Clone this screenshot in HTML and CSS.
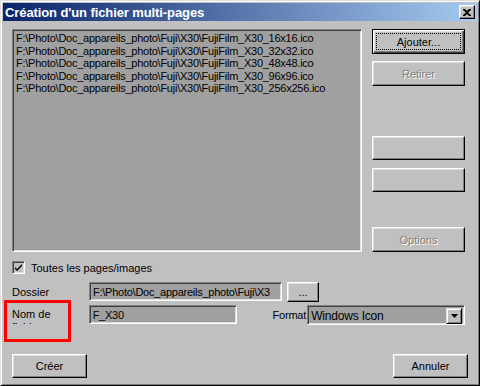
FILE: index.html
```html
<!DOCTYPE html>
<html lang="fr">
<head>
<meta charset="utf-8">
<title>Création d'un fichier multi-pages</title>
<link rel="stylesheet" href="styles.css">
</head>
<body>
<div class="window">
  <div class="titlebar">
    <span class="title">Création d'un fichier multi-pages</span>
    <span class="close"><svg width="8" height="7" viewBox="0 0 8 7"><path d="M0 0h2l2 2 2-2h2v1L5 3.5 8 6v1H6L4 5 2 7H0V6l3-2.5L0 1z" fill="#000"/></svg></span>
  </div>
  <div class="body">
    <div class="top">
      <div class="list">
        <div>F:\Photo\Doc_appareils_photo\Fuji\X30\FujiFilm_X30_16x16.ico</div>
        <div>F:\Photo\Doc_appareils_photo\Fuji\X30\FujiFilm_X30_32x32.ico</div>
        <div>F:\Photo\Doc_appareils_photo\Fuji\X30\FujiFilm_X30_48x48.ico</div>
        <div>F:\Photo\Doc_appareils_photo\Fuji\X30\FujiFilm_X30_96x96.ico</div>
        <div>F:\Photo\Doc_appareils_photo\Fuji\X30\FujiFilm_X30_256x256.ico</div>
      </div>
      <div class="side">
        <button class="btn default"><span class="focus">Ajouter...</span></button>
        <button class="btn disabled retirer">Retirer</button>
        <button class="btn blank1"></button>
        <button class="btn blank2"></button>
        <button class="btn disabled options">Options</button>
      </div>
    </div>
    <div class="check-row">
      <span class="checkbox"><svg width="9" height="9" viewBox="0 0 9 9"><path d="M1 4l2 2 5-5v2L3 8 1 6z" fill="#000"/></svg></span>
      <span>Toutes les pages/images</span>
    </div>
    <div class="row dossier">
      <span class="label">Dossier</span>
      <span class="field field-dossier">F:\Photo\Doc_appareils_photo\Fuji\X3</span>
      <button class="btn small">...</button>
    </div>
    <div class="row nom">
      <span class="label label-nom">Nom de fichier</span>
      <span class="field field-nom">F_X30</span>
      <span class="format-label">Format</span>
      <span class="select">
        <span class="select-text">Windows Icon</span>
        <span class="drop"><svg width="7" height="4" viewBox="0 0 7 4"><path d="M0 0h7L3.5 4z" fill="#000"/></svg></span>
      </span>
    </div>
    <div class="bottom">
      <button class="btn wide">Créer</button>
      <button class="btn wide">Annuler</button>
    </div>
  </div>
  <div class="annot"></div>
</div>
</body>
</html>
```
FILE: styles.css
```css
* { box-sizing: border-box; }
html, body { margin: 0; padding: 0; background: #c0c0c0; }
body {
  font-family: "Liberation Sans", Arial, sans-serif;
  font-size: 11px;
  color: #000;
}
.window {
  position: relative;
  width: 480px;
  height: 386px;
  background: #c0c0c0;
  border: 1px solid;
  border-color: #dfdfdf #000 #000 #dfdfdf;
  box-shadow: inset 1px 1px #fff, inset -1px -1px #808080;
  padding: 2px;
}
.titlebar {
  height: 18px;
  background: linear-gradient(to right, #0a246a, #a6caf0);
  display: flex;
  align-items: center;
  justify-content: space-between;
  padding: 0 2px 0 2px;
}
.title {
  color: #fff;
  font-weight: bold;
  font-size: 13px;
  letter-spacing: -0.1px;
}
.close {
  width: 16px;
  height: 14px;
  background: #c0c0c0;
  border: 1px solid;
  border-color: #fff #000 #000 #fff;
  box-shadow: inset -1px -1px #808080, inset 1px 1px #dfdfdf;
  display: flex;
  align-items: center;
  justify-content: center;
}
.body {
  padding: 8px 12px 0 9px;
}
.top {
  display: flex;
  gap: 10px;
}
.list {
  width: 350px;
  height: 223px;
  background: #a0a0a0;
  border: 1px solid;
  border-color: #808080 #fff #fff #808080;
  box-shadow: inset 1px 1px #404040, inset -1px -1px #dfdfdf;
  padding: 2px 3px;
  line-height: 12.6px;
  letter-spacing: -0.25px;
  white-space: nowrap;
  overflow: hidden;
}
.side {
  width: 93px;
  display: flex;
  flex-direction: column;
}
.btn {
  font-family: "Liberation Sans", Arial, sans-serif;
  font-size: 11px;
  color: #000;
  background: #c0c0c0;
  border: 1px solid;
  border-color: #fff #000 #000 #fff;
  box-shadow: inset -1px -1px #808080, inset 1px 1px #dfdfdf;
  padding: 0;
  height: 25px;
  display: flex;
  align-items: center;
  justify-content: center;
}
.btn.default {
  border: 1px solid #000;
  box-shadow: inset 1px 1px #fff, inset -1px -1px #404040, inset -2px -2px #808080, inset 2px 2px #dfdfdf;
  padding: 3px;
}
.focus {
  flex: 1;
  align-self: stretch;
  border: 1px dotted #000;
  display: flex;
  align-items: center;
  justify-content: center;
}
.disabled {
  color: #808080;
  text-shadow: 1px 1px #fff;
}
.retirer { margin-top: 7px; }
.blank1 { margin-top: 50px; height: 24px; }
.blank2 { margin-top: 8px; height: 24px; }
.options { margin-top: auto; }
.check-row {
  display: flex;
  align-items: center;
  gap: 6px;
  margin-top: 9px;
  height: 13px;
}
.checkbox {
  width: 13px;
  height: 13px;
  background: #c0c0c0;
  border: 1px solid;
  border-color: #808080 #fff #fff #808080;
  box-shadow: inset 1px 1px #404040, inset -1px -1px #dfdfdf;
  display: flex;
  align-items: center;
  justify-content: center;
}
.row {
  display: flex;
  align-items: flex-start;
}
.dossier { margin-top: 8px; height: 20px; }
.nom { margin-top: 3px; height: 21px; }
.label {
  width: 77px;
  padding-top: 4px;
  line-height: 13px;
}
.label-nom {
  width: 77px;
  height: 19px;
  padding-top: 3px;
  overflow: hidden;
  white-space: normal;
  padding-right: 30px;
}
.field {
  height: 19px;
  background: #a0a0a0;
  border: 1px solid;
  border-color: #808080 #fff #fff #808080;
  box-shadow: inset 1px 1px #404040, inset -1px -1px #dfdfdf;
  padding: 2px 3px 0;
  line-height: 14px;
  letter-spacing: -0.25px;
  white-space: nowrap;
  overflow: hidden;
}
.field-dossier { width: 193px; }
.btn.small { width: 32px; height: 20px; margin-left: 5px; }
.field-nom { width: 149px; }
.format-label { margin-left: 36px; padding-top: 4px; width: 35px; white-space: nowrap; letter-spacing: -0.2px; }
.select {
  width: 159px;
  height: 20px;
  display: flex;
  background: #a0a0a0;
  border: 1px solid;
  border-color: #808080 #fff #fff #808080;
  box-shadow: inset 1px 1px #404040, inset -1px -1px #dfdfdf;
  padding: 2px;
}
.select-text {
  flex: 1;
  padding: 1px 1px 0;
  line-height: 14px;
  font-size: 12px;
  letter-spacing: -0.2px;
}
.drop {
  width: 16px;
  height: 16px;
  background: #c0c0c0;
  border: 1px solid;
  border-color: #dfdfdf #000 #000 #dfdfdf;
  box-shadow: inset 1px 1px #fff, inset -1px -1px #808080;
  display: flex;
  align-items: center;
  justify-content: center;
}
.bottom {
  display: flex;
  justify-content: space-between;
  margin-top: 28px;
  padding-right: 0;
  width: 456px;
}
.btn.wide { width: 75px; height: 24px; }
.annot {
  position: absolute;
  left: 3px;
  top: 299px;
  width: 67px;
  height: 42px;
  border: 3px solid #ff0000;
}
```
